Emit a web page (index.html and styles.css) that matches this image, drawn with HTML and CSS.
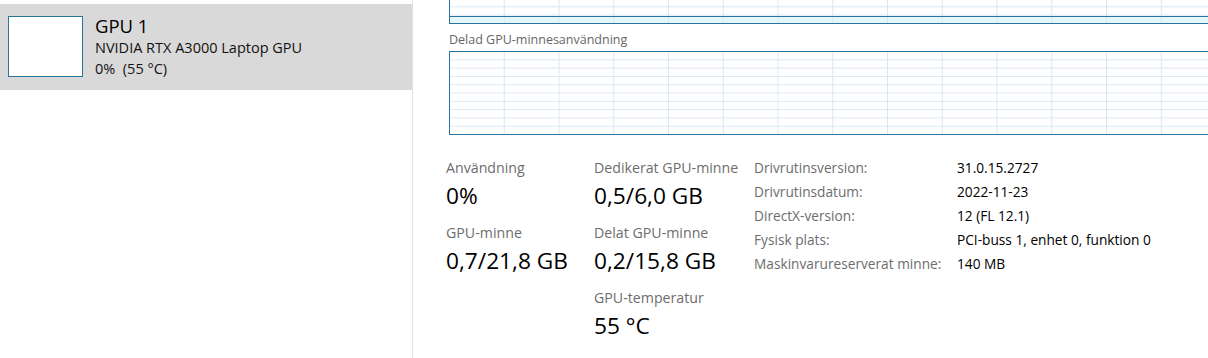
FILE: index.html
```html
<!DOCTYPE html>
<html lang="sv">
<head>
    <meta charset="UTF-8">
    <meta name="viewport" content="width=device-width, initial-scale=1.0">
    <title>Aktivitetshanteraren - GPU 1</title>
    <link rel="stylesheet" href="styles.css">
</head>
<body>
    <div class="app">
        <!-- Left list of devices -->
        <aside class="sidebar">
            <div class="perf-item selected">
                <div class="thumb"></div>
                <div class="perf-text">
                    <div class="perf-title">GPU 1</div>
                    <div class="perf-sub">NVIDIA RTX A3000 Laptop GPU</div>
                    <div class="perf-sub">0%&nbsp; (55 °C)</div>
                </div>
            </div>
        </aside>

        <!-- Details for the selected GPU -->
        <main class="content">
            <div class="graph graph-dedicated">
                <div class="graph-fill"></div>
            </div>

            <div class="graph-label">Delad GPU-minnesanvändning</div>
            <div class="graph graph-shared"></div>

            <div class="stats">
                <div class="stat-col col-first">
                    <div class="stat">
                        <div class="stat-label">Användning</div>
                        <div class="stat-value">0%</div>
                    </div>
                    <div class="stat">
                        <div class="stat-label">GPU-minne</div>
                        <div class="stat-value">0,7/21,8 GB</div>
                    </div>
                </div>
                <div class="stat-col col-second">
                    <div class="stat">
                        <div class="stat-label">Dedikerat GPU-minne</div>
                        <div class="stat-value">0,5/6,0 GB</div>
                    </div>
                    <div class="stat">
                        <div class="stat-label">Delat GPU-minne</div>
                        <div class="stat-value">0,2/15,8 GB</div>
                    </div>
                    <div class="stat">
                        <div class="stat-label">GPU-temperatur</div>
                        <div class="stat-value">55 °C</div>
                    </div>
                </div>

                <div class="details">
                    <div class="detail-label">Drivrutinsversion:</div>
                    <div class="detail-value">31.0.15.2727</div>
                    <div class="detail-label">Drivrutinsdatum:</div>
                    <div class="detail-value">2022-11-23</div>
                    <div class="detail-label">DirectX-version:</div>
                    <div class="detail-value">12 (FL 12.1)</div>
                    <div class="detail-label">Fysisk plats:</div>
                    <div class="detail-value">PCI-buss 1, enhet 0, funktion 0</div>
                    <div class="detail-label">Maskinvarureserverat minne:</div>
                    <div class="detail-value">140 MB</div>
                </div>
            </div>
        </main>
    </div>
</body>
</html>
```

FILE: styles.css
```css
body {
    margin: 0;
    background: #fff;
    font-family: "Open Sans", "Noto Sans", sans-serif;
    color: #000;
}

.app {
    display: flex;
    height: 358px;
    overflow: hidden;
}

/* Sidebar */

.sidebar {
    width: 412px;
    flex-shrink: 0;
    border-right: 1px solid #e3e3e3;
    padding-top: 4px;
    box-sizing: content-box;
}

.perf-item {
    display: flex;
    height: 86px;
    box-sizing: border-box;
    padding: 12px 0 0 8px;
}

.perf-item.selected {
    background: #d9d9d9;
}

.thumb {
    width: 73px;
    height: 59px;
    background: #fff;
    border: 1px solid #2a739e;
    flex-shrink: 0;
}

.perf-text {
    margin-left: 12px;
    margin-top: -2px;
}

.perf-title {
    font-size: 18.5px;
    line-height: 24px;
    margin-bottom: -1px;
}

.perf-sub {
    font-size: 14.5px;
    line-height: 21px;
    color: #111;
}

/* Graphs */

.content {
    flex: 1;
    padding-left: 36px;
    overflow: hidden;
}

.graph {
    width: 800px;
    border: 1px solid #2a739e;
    border-right: none;
    background-color: #fff;
    background-image:
        linear-gradient(to right, transparent calc(100% - 1px), #dae7f2 calc(100% - 1px)),
        linear-gradient(to bottom, transparent calc(100% - 1px), #dae7f2 calc(100% - 1px));
    background-size: 54.75px 100%, 100% 8.3px;
}

.graph-dedicated {
    height: 23px;
    border-top: none;
    position: relative;
    background-position: 0 0, 0 -1px;
}

.graph-fill {
    position: absolute;
    left: 0;
    right: 0;
    bottom: 0;
    height: 6px;
    border-top: 1px solid #2a739e;
    background: rgba(205, 240, 250, 0.5);
}

.graph-label {
    font-size: 12.5px;
    line-height: 16px;
    color: #666;
    margin-top: 8px;
    margin-bottom: 3px;
}

.graph-shared {
    height: 82px;
}

/* Stats */

.stats {
    display: flex;
    margin-top: 23px;
    margin-left: -3px;
}

.stat-col {
    display: flex;
    flex-direction: column;
}

.col-first {
    width: 148px;
}

.col-second {
    width: 160px;
}

.stat {
    height: 65px;
}

.stat-label {
    font-size: 14.2px;
    line-height: 20px;
    color: #6d6d6d;
}

.stat-value {
    font-size: 22.7px;
    line-height: 32px;
    margin-top: 2px;
    color: #000;
}

.details {
    display: grid;
    grid-template-columns: 203px auto;
    grid-auto-rows: 24px;
    font-size: 13.7px;
    line-height: 20px;
    align-content: start;
}

.detail-label {
    color: #6d6d6d;
}

.detail-value {
    color: #000;
}
```
